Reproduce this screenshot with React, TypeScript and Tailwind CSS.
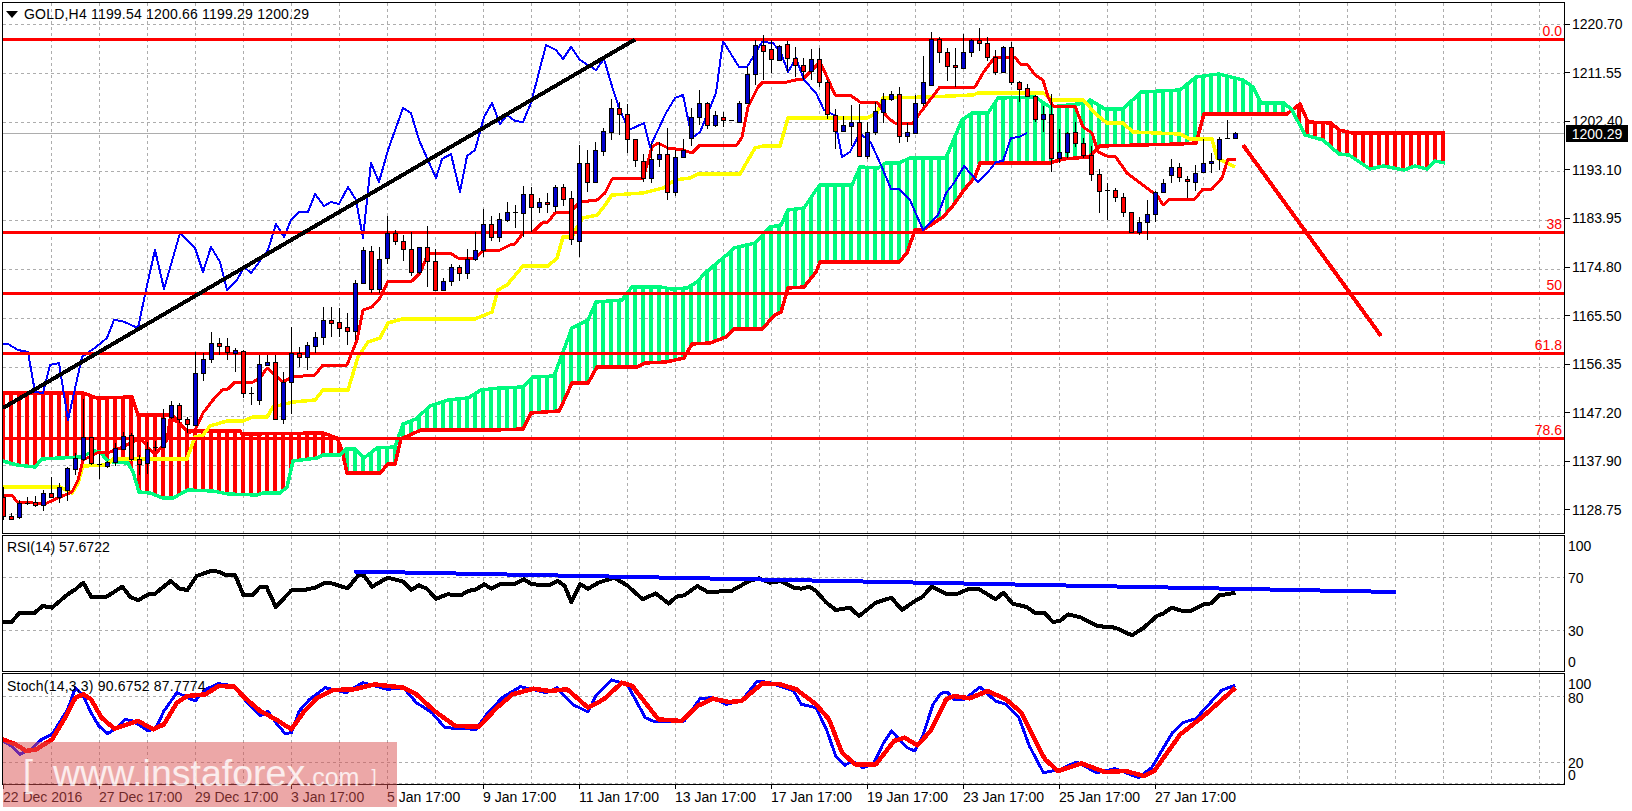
import React from "react";

type Pt = [number, number];
type Candle = [number, number, number, number, 0 | 1]; // high, top, bottom, low, 1 = up

const BAR = (i: number) => 3.5 + 8 * i;

// prices read off the chart, in page pixels
const candles: Candle[] = [
  [487, 497, 516, 520, 0], [513, 516, 519, 520, 0], [500, 503, 517, 519, 1], [497, 503, 504, 505, 0], [496, 502, 505, 507, 0],
  [490, 493, 505, 511, 1], [477, 493, 497, 498, 0], [483, 487, 497, 503, 1], [467, 468, 490, 501, 1], [453, 458, 469, 475, 1],
  [399, 437, 459, 461, 1], [437, 437, 463, 465, 0], [454, 464, 465, 479, 0], [461, 462, 466, 468, 1], [443, 448, 462, 466, 1],
  [432, 436, 449, 450, 1], [433, 435, 459, 461, 0], [455, 459, 464, 475, 0], [442, 449, 463, 474, 1], [441, 447, 448, 451, 0],
  [409, 418, 447, 448, 1], [401, 405, 417, 419, 1], [403, 405, 419, 423, 0], [417, 419, 424, 433, 0], [352, 373, 425, 426, 1],
  [353, 359, 373, 381, 1], [332, 343, 359, 363, 1], [338, 343, 346, 355, 0], [338, 346, 352, 360, 0], [348, 350, 353, 372, 1],
  [350, 351, 393, 398, 0], [387, 393, 394, 405, 0], [355, 364, 400, 405, 1], [355, 362, 365, 366, 1], [355, 362, 419, 419, 0],
  [372, 382, 419, 424, 1], [327, 353, 382, 414, 1], [347, 353, 357, 367, 0], [342, 345, 357, 370, 1], [332, 337, 346, 353, 1],
  [307, 320, 337, 345, 1], [307, 320, 323, 337, 0], [308, 322, 328, 337, 0], [313, 327, 331, 345, 0], [280, 283, 331, 340, 1],
  [247, 250, 283, 284, 1], [246, 251, 289, 293, 0], [247, 259, 289, 293, 1], [216, 233, 258, 264, 1], [230, 233, 241, 245, 0],
  [235, 241, 249, 261, 0], [232, 249, 272, 276, 0], [247, 247, 272, 274, 1], [226, 247, 261, 287, 0], [249, 261, 290, 291, 0],
  [278, 281, 290, 291, 1], [264, 267, 281, 286, 1], [265, 267, 273, 281, 0], [249, 259, 273, 279, 1], [232, 250, 259, 261, 1],
  [209, 224, 250, 257, 1], [216, 224, 237, 241, 0], [213, 219, 237, 242, 1], [202, 212, 220, 222, 1], [205, 212, 213, 228, 0],
  [186, 194, 213, 237, 1], [187, 194, 207, 232, 0], [198, 202, 207, 213, 1], [193, 202, 204, 213, 0], [185, 187, 206, 212, 1],
  [184, 187, 199, 206, 0], [191, 198, 239, 245, 0], [145, 163, 241, 257, 1], [150, 163, 182, 192, 0], [142, 150, 182, 183, 1],
  [128, 131, 151, 156, 1], [99, 108, 132, 140, 1], [102, 108, 114, 135, 0], [104, 114, 139, 153, 0], [139, 139, 160, 167, 0],
  [154, 161, 178, 182, 0], [143, 159, 178, 183, 1], [142, 154, 159, 167, 1], [128, 154, 192, 200, 0], [150, 157, 192, 196, 1],
  [139, 150, 157, 157, 1], [108, 117, 138, 146, 1], [90, 103, 117, 125, 1], [102, 103, 125, 129, 0], [111, 115, 125, 127, 1],
  [112, 117, 120, 127, 0], [120, 120, 121, 121, 0], [101, 103, 122, 122, 1], [67, 74, 103, 104, 1], [40, 45, 74, 85, 1],
  [35, 45, 51, 80, 0], [40, 49, 59, 73, 0], [45, 46, 60, 61, 1], [41, 44, 58, 72, 0], [47, 58, 65, 77, 0],
  [58, 65, 71, 80, 0], [49, 59, 71, 80, 1], [48, 59, 82, 87, 0], [80, 82, 114, 119, 0], [109, 115, 131, 149, 0],
  [116, 125, 131, 132, 1], [105, 122, 126, 146, 1], [104, 122, 156, 157, 0], [122, 132, 156, 159, 1], [102, 111, 132, 135, 1],
  [93, 99, 112, 123, 1], [91, 94, 99, 101, 1], [87, 94, 136, 143, 0], [123, 132, 136, 142, 1], [95, 103, 133, 134, 1],
  [56, 82, 103, 106, 1], [32, 39, 85, 86, 1], [37, 39, 52, 63, 0], [48, 52, 66, 81, 0], [48, 65, 67, 87, 0],
  [34, 52, 68, 68, 1], [39, 40, 52, 57, 1], [28, 40, 43, 51, 0], [37, 43, 57, 61, 0], [50, 57, 72, 75, 0],
  [46, 47, 72, 73, 1], [42, 47, 82, 85, 0], [81, 82, 89, 102, 0], [84, 88, 96, 96, 0], [95, 96, 119, 122, 0],
  [106, 114, 119, 132, 1], [94, 114, 158, 172, 0], [129, 152, 158, 163, 1], [132, 133, 152, 158, 1], [122, 132, 143, 147, 0],
  [138, 143, 155, 158, 0], [146, 155, 174, 181, 0], [169, 174, 191, 213, 0], [183, 190, 191, 220, 0], [188, 190, 197, 202, 0],
  [193, 197, 212, 217, 0], [212, 212, 232, 233, 0], [217, 222, 232, 235, 1], [200, 214, 222, 240, 1], [191, 192, 214, 222, 1],
  [179, 183, 192, 193, 1], [159, 167, 175, 183, 1], [163, 167, 177, 182, 0], [176, 179, 181, 198, 0], [165, 173, 182, 191, 1],
  [139, 163, 172, 173, 1], [153, 161, 163, 173, 1], [137, 139, 159, 170, 1], [120, 138, 139, 139, 0], [132, 133, 138, 139, 1],
];

const senkouA: Pt[] = [
  [3, 461], [17, 465], [35, 467], [42, 459], [60, 458], [80, 457], [90, 453], [95, 451], [100, 452], [107, 460], [113, 462], [128, 463],
  [133, 472], [139, 492], [150, 493], [163, 498], [173, 498], [188, 490], [213, 491], [228, 494], [257, 495], [263, 493], [280, 493],
  [287, 487], [293, 461], [317, 458], [323, 455], [340, 455], [346, 449], [355, 449], [364, 458], [377, 448], [395, 447], [403, 424],
  [416, 419], [430, 406], [448, 400], [468, 398], [481, 390], [500, 388], [523, 387], [533, 377], [554, 376], [572, 328], [588, 320],
  [596, 302], [622, 300], [632, 287], [661, 287], [671, 289], [687, 288], [697, 282], [705, 273], [729, 253], [734, 248], [755, 243],
  [770, 227], [781, 225], [788, 210], [804, 208], [816, 190], [820, 185], [852, 185], [860, 167], [878, 168], [886, 163], [899, 163],
  [910, 158], [946, 158], [962, 120], [972, 113], [988, 113], [998, 98], [1035, 97], [1050, 107], [1087, 103], [1090, 100], [1105, 109],
  [1123, 109], [1141, 92], [1180, 90], [1196, 77], [1219, 74], [1243, 80], [1253, 87], [1261, 103], [1284, 103], [1292, 110], [1305, 135],
  [1323, 140], [1339, 154], [1349, 155], [1370, 169], [1383, 166], [1404, 170], [1415, 166], [1427, 169], [1435, 161], [1445, 163],
];

const senkouB: Pt[] = [
  [3, 393], [83, 393], [97, 398], [132, 397], [138, 415], [172, 415], [187, 431], [240, 431], [242, 434], [323, 433], [337, 438], [342, 450],
  [347, 473], [380, 473], [388, 464], [395, 464], [401, 439], [421, 430], [494, 430], [523, 429], [531, 413], [559, 411], [562, 405], [572, 383],
  [588, 383], [597, 367], [637, 367], [645, 363], [666, 362], [684, 358], [692, 344], [710, 343], [726, 337], [734, 329], [762, 329], [775, 315],
  [781, 312], [788, 288], [804, 287], [816, 272], [820, 262], [899, 262], [907, 253], [915, 230], [923, 230], [943, 217], [952, 207], [964, 190],
  [975, 177], [980, 163], [1050, 163], [1063, 159], [1089, 157], [1100, 146], [1180, 144], [1196, 143], [1204, 114], [1287, 114], [1300, 104],
  [1308, 122], [1331, 123], [1339, 130], [1352, 133], [1445, 133],
];

const kijun: Pt[] = [
  [3, 487], [60, 487], [72, 493], [78, 483], [83, 466], [107, 465], [113, 459], [187, 459], [195, 437], [203, 435], [210, 426], [227, 421],
  [243, 421], [253, 417], [267, 417], [273, 407], [293, 402], [315, 400], [323, 390], [348, 390], [358, 357], [368, 342], [380, 338], [388, 323],
  [402, 319], [475, 319], [492, 312], [498, 290], [507, 285], [523, 266], [548, 266], [557, 258], [563, 237], [572, 237], [575, 230], [583, 218],
  [597, 215], [603, 208], [612, 195], [643, 193], [663, 188], [675, 180], [690, 178], [698, 174], [740, 174], [755, 148], [763, 146], [780, 146],
  [788, 118], [867, 118], [877, 113], [883, 98], [928, 97], [973, 95], [978, 93], [1043, 93], [1053, 100], [1083, 100], [1097, 115], [1107, 123],
  [1123, 123], [1133, 132], [1180, 134], [1190, 139], [1212, 139], [1217, 158], [1235, 167],
];

const tenkan: Pt[] = [
  [3, 495], [12, 495], [17, 502], [33, 503], [47, 503], [58, 498], [72, 492], [78, 480], [83, 460], [97, 453], [110, 452], [123, 447], [140, 438],
  [155, 455], [167, 440], [170, 419], [180, 423], [188, 433], [195, 430], [203, 413], [213, 400], [222, 390], [228, 389], [235, 382], [253, 382],
  [260, 378], [267, 368], [283, 382], [292, 377], [315, 375], [323, 365], [347, 365], [353, 350], [357, 340], [363, 310], [372, 307], [380, 298],
  [388, 281], [412, 281], [420, 273], [428, 254], [450, 253], [458, 258], [475, 258], [483, 251], [500, 250], [510, 245], [515, 244], [523, 233],
  [533, 232], [542, 223], [548, 222], [555, 213], [570, 212], [580, 202], [597, 200], [605, 193], [612, 179], [643, 178], [647, 165], [652, 147],
  [658, 143], [668, 148], [683, 150], [692, 153], [700, 145], [737, 145], [742, 137], [748, 107], [758, 87], [763, 82], [787, 82], [800, 79],
  [803, 79], [820, 62], [827, 77], [835, 95], [850, 95], [860, 102], [878, 103], [887, 117], [895, 123], [913, 123], [920, 113], [940, 87], [975, 87],
  [983, 73], [995, 57], [1015, 57], [1020, 64], [1027, 64], [1035, 75], [1043, 80], [1048, 97], [1053, 106], [1075, 106], [1083, 127], [1092, 133],
  [1098, 152], [1107, 156], [1115, 156], [1127, 173], [1152, 192], [1157, 195], [1163, 205], [1170, 199], [1195, 199], [1203, 189], [1212, 189],
  [1222, 178], [1228, 159], [1236, 159],
];

const chikou: Pt[] = [
  [3, 344], [8, 344], [18, 350], [28, 352], [35, 392], [43, 393], [50, 365], [59, 363], [68, 420], [82, 357], [96, 347], [107, 338], [114, 320],
  [122, 321], [138, 328], [146, 290], [155, 250], [164, 289], [180, 233], [195, 248], [203, 272], [211, 247], [220, 262], [227, 290], [237, 280],
  [244, 267], [251, 273], [268, 250], [276, 224], [284, 237], [291, 220], [299, 212], [308, 212], [315, 194], [324, 206], [331, 202], [339, 204],
  [348, 187], [356, 200], [363, 238], [371, 163], [379, 182], [388, 150], [403, 108], [411, 113], [419, 140], [436, 178], [442, 159], [451, 154],
  [460, 192], [467, 156], [475, 150], [484, 117], [492, 103], [500, 124], [507, 115], [515, 121], [523, 122], [531, 103], [546, 45], [556, 50],
  [563, 59], [571, 47], [580, 60], [588, 65], [596, 70], [604, 59], [611, 83], [619, 108], [629, 130], [644, 123], [650, 147], [666, 113], [675, 98],
  [683, 95], [692, 138], [700, 132], [716, 93], [723, 41], [739, 67], [747, 67], [762, 42], [773, 43], [781, 53], [788, 72], [796, 58], [804, 80],
  [816, 93], [824, 110], [834, 115], [842, 157], [850, 152], [860, 133], [871, 143], [881, 165], [891, 189], [899, 189], [910, 200], [923, 230],
  [938, 215], [946, 193], [954, 183], [964, 166], [978, 182], [988, 172], [996, 162], [1003, 161], [1011, 138], [1019, 137], [1027, 133],
];

// indicator panes were read from half-size crops, these two put them back in page pixels
const left = (pts: Pt[]): Pt[] => pts.map(([x, y]) => [x / 1.9216, 406 + y / 3]);
const right = (pts: Pt[]): Pt[] => pts.map(([x, y]) => [816 + x / 1.9216, 406 + y / 3]);

const rsi: Pt[] = [
  ...left([[5, 648], [22, 648], [38, 620], [65, 622], [82, 600], [100, 605], [130, 565], [145, 550], [160, 530], [175, 572], [205, 572], [235, 542], [250, 572], [265, 583], [285, 565], [298, 563], [328, 525], [345, 548], [360, 552], [378, 510], [405, 495], [420, 497], [435, 508], [452, 508], [468, 568], [485, 568], [500, 542], [512, 542], [530, 603], [560, 553], [585, 552], [605, 545], [622, 532], [637, 532], [668, 547], [690, 505], [700, 510], [715, 542], [745, 515], [775, 527], [790, 552], [805, 538], [820, 548], [838, 578], [860, 565], [885, 568], [900, 555], [915, 550], [930, 535], [945, 548], [960, 535], [990, 533], [1007, 520], [1022, 535], [1055, 537], [1072, 525], [1085, 540], [1098, 588], [1115, 535], [1130, 548], [1150, 530], [1180, 515], [1205, 538], [1235, 580], [1260, 562], [1285, 593], [1300, 572], [1315, 568], [1340, 540], [1360, 558], [1405, 555], [1440, 525], [1458, 517], [1480, 530], [1500, 525], [1525, 545], [1540, 548], [1555, 542]]),
  ...right([[0, 555], [20, 590], [38, 612], [65, 605], [83, 630], [115, 590], [145, 575], [165, 612], [190, 585], [205, 572], [222, 542], [250, 563], [272, 563], [295, 548], [312, 548], [345, 580], [360, 560], [378, 593], [405, 603], [420, 620], [440, 622], [455, 648], [468, 645], [485, 625], [510, 635], [540, 660], [575, 665], [607, 688], [630, 665], [655, 630], [668, 622], [683, 605], [705, 615], [720, 615], [745, 595], [760, 592], [775, 567], [790, 565], [806, 560]]),
];

const stochMain: Pt[] = [
  ...left([[5, 1005], [22, 1020], [38, 1045], [60, 1030], [80, 1000], [100, 985], [130, 910], [145, 845], [160, 870], [175, 920], [190, 960], [207, 983], [225, 965], [240, 940], [255, 945], [285, 975], [300, 965], [315, 915], [340, 860], [375, 885], [395, 850], [420, 833], [450, 840], [475, 890], [500, 930], [515, 915], [530, 950], [548, 983], [560, 980], [575, 915], [595, 880], [625, 845], [665, 860], [697, 830], [745, 850], [775, 845], [800, 890], [830, 920], [855, 965], [915, 970], [935, 925], [965, 875], [1000, 842], [1050, 860], [1070, 845], [1100, 895], [1130, 918], [1145, 870], [1175, 822], [1205, 835], [1240, 935], [1255, 945], [1315, 945], [1345, 878], [1370, 875], [1395, 895], [1425, 885], [1455, 825], [1480, 830], [1525, 855], [1540, 895]]),
  ...right([[0, 905], [20, 970], [38, 1050], [55, 1078], [70, 1065], [90, 1085], [110, 1075], [130, 1010], [145, 975], [175, 1025], [190, 1035], [205, 990], [225, 895], [240, 862], [252, 858], [265, 880], [285, 880], [315, 843], [345, 885], [365, 895], [390, 935], [410, 1020], [437, 1100], [470, 1090], [500, 1068], [540, 1100], [575, 1088], [620, 1115], [645, 1085], [685, 980], [705, 950], [730, 938], [780, 852], [806, 838]]),
];

const stochSignal: Pt[] = [
  ...left([[5, 1000], [30, 1015], [50, 1035], [70, 1030], [100, 1000], [125, 935], [145, 875], [160, 865], [175, 880], [195, 935], [220, 968], [240, 958], [265, 945], [295, 970], [315, 955], [340, 890], [360, 870], [395, 865], [420, 840], [450, 842], [470, 875], [500, 915], [530, 940], [560, 970], [585, 915], [610, 875], [640, 852], [680, 850], [720, 835], [775, 845], [800, 865], [835, 915], [875, 960], [920, 962], [955, 905], [985, 865], [1025, 848], [1055, 855], [1090, 850], [1130, 905], [1160, 880], [1195, 830], [1215, 840], [1265, 940], [1310, 945], [1340, 900], [1370, 878], [1400, 888], [1425, 885], [1465, 832], [1500, 835], [1530, 850]]),
  ...right([[0, 895], [25, 940], [50, 1040], [75, 1075], [115, 1075], [150, 1005], [170, 995], [195, 1018], [220, 975], [250, 880], [265, 870], [295, 877], [330, 855], [365, 880], [395, 920], [420, 1000], [440, 1060], [465, 1095], [510, 1072], [555, 1098], [595, 1095], [630, 1110], [650, 1095], [700, 985], [745, 930], [806, 845]]),
];

const priceLabels = ["1220.70", "1211.55", "1202.40", "1193.10", "1183.95", "1174.80", "1165.50", "1156.35", "1147.20", "1137.90", "1128.75"];
const timeLabels = ["22 Dec 2016", "27 Dec 17:00", "29 Dec 17:00", "3 Jan 17:00", "5 Jan 17:00", "9 Jan 17:00", "11 Jan 17:00", "13 Jan 17:00", "17 Jan 17:00", "19 Jan 17:00", "23 Jan 17:00", "25 Jan 17:00", "27 Jan 17:00"];
const fibs = [
  { y: 39.5, label: "0.0", labelY: 36 },
  { y: 232.5, label: "38", labelY: 229 },
  { y: 293.5, label: "50", labelY: 290 },
  { y: 353.5, label: "61.8", labelY: 350 },
  { y: 438.5, label: "78.6", labelY: 435 },
];

const gridX = Array.from({ length: 32 }, (_, i) => 51.5 + 48 * i);

const pts = (p: Pt[]) => p.map(([x, y]) => `${x},${y}`).join(" ");

function yAt(line: Pt[], x: number) {
  for (let i = 1; i < line.length; i++) {
    if (x <= line[i][0]) {
      const [x0, y0] = line[i - 1];
      const [x1, y1] = line[i];
      return y0 + ((y1 - y0) * (x - x0)) / (x1 - x0);
    }
  }
  return line[line.length - 1][1];
}

function Grid({ top, bottom, rows }: { top: number; bottom: number; rows: number[] }) {
  return (
    <g stroke="#adadad" strokeWidth={1} strokeDasharray="3 3" shapeRendering="crispEdges">
      {gridX.map((x) => (
        <line key={x} x1={x} x2={x} y1={top} y2={bottom} />
      ))}
      {rows.map((y) => (
        <line key={y} x1={3} x2={1564} y1={y} y2={y} />
      ))}
    </g>
  );
}

function Trace({ points, color, width }: { points: Pt[]; color: string; width: number }) {
  return <polyline points={pts(points)} fill="none" stroke={color} strokeWidth={width} strokeLinejoin="round" shapeRendering="crispEdges" />;
}

function MainChart() {
  const stripes = Array.from({ length: 181 }, (_, i) => {
    const cx = BAR(i);
    const a = yAt(senkouA, cx);
    const b = yAt(senkouB, cx);
    return (
      <rect key={i} x={Math.floor(cx) - 2} y={Math.min(a, b)} width={4} height={Math.abs(a - b)} fill={a < b ? "#00fa7f" : "#ff0000"} />
    );
  });

  return (
    <svg viewBox="3 3 1561 530" className="block h-full w-full">
      <Grid top={3} bottom={533} rows={priceLabels.map((_, i) => 24.5 + 49 * i)} />
      <line x1={3} x2={1564} y1={133.5} y2={133.5} stroke="#adadad" strokeWidth={1} shapeRendering="crispEdges" />
      <g shapeRendering="crispEdges">{stripes}</g>
      <Trace points={senkouB} color="#ff0000" width={3.5} />
      <Trace points={senkouA} color="#00fa7f" width={3.5} />
      <Trace points={kijun} color="#ffff00" width={3.5} />
      <Trace points={tenkan} color="#ff0000" width={3} />
      <Trace points={chikou} color="#0000ff" width={2} />
      {fibs.map((f) => (
        <line key={f.y} x1={3} x2={1564} y1={f.y} y2={f.y} stroke="#ff0000" strokeWidth={3} shapeRendering="crispEdges" />
      ))}
      <line x1={3} y1={408} x2={635} y2={39.5} stroke="#000" strokeWidth={4} shapeRendering="crispEdges" />
      <line x1={1243} y1={145} x2={1381} y2={336} stroke="#ff0000" strokeWidth={4} shapeRendering="crispEdges" />
      <g shapeRendering="crispEdges">
        {candles.map(([high, top, bottom, low, up], i) => {
          const cx = BAR(i);
          return (
            <g key={i}>
              <line x1={cx} x2={cx} y1={high} y2={low} stroke="#000" />
              {bottom - top < 2 ? (
                <line x1={cx - 2.5} x2={cx + 2.5} y1={top + 0.5} y2={top + 0.5} stroke="#000" />
              ) : (
                <rect x={cx - 2} y={top + 0.5} width={4} height={bottom - top} fill={up ? "#0000cd" : "#ff0000"} stroke="#000" />
              )}
            </g>
          );
        })}
      </g>
      {fibs.map((f) => (
        <text key={f.label} x={1562} y={f.labelY} textAnchor="end" fontSize={14} fill="#ff0000">
          {f.label}
        </text>
      ))}
    </svg>
  );
}

function RsiChart() {
  return (
    <svg viewBox="3 536 1561 135" className="block h-full w-full">
      <Grid top={536} bottom={671} rows={[577.5, 630.5]} />
      <Trace points={rsi} color="#000" width={4} />
      <line x1={354} y1={571.5} x2={1396} y2={592} stroke="#0000ff" strokeWidth={4} shapeRendering="crispEdges" />
    </svg>
  );
}

function StochChart() {
  return (
    <svg viewBox="3 674 1561 110" className="block h-full w-full">
      <Grid top={674} bottom={784} rows={[696.5, 762.5, 783.5]} />
      <Trace points={stochMain} color="#0000ff" width={3} />
      <Trace points={stochSignal} color="#ff0000" width={4.5} />
    </svg>
  );
}

export default function App() {
  return (
    <div className="relative h-[811px] w-[1632px] overflow-hidden bg-white font-['Liberation_Sans',sans-serif] text-[14px] leading-none text-black">
      {/* main pane */}
      <div className="flex h-[534px]">
        <div className="relative ml-[2px] mt-[2px] h-[532px] w-[1563px] border border-black">
          <MainChart />
          <div className="absolute left-[3px] top-[4px] flex items-center gap-[6px]">
            <span className="h-0 w-0 border-x-[6px] border-t-[7px] border-x-transparent border-t-black" />
            <span className="whitespace-pre tracking-[0.2px]">GOLD,H4 1199.54 1200.66 1199.29 1200.29</span>
          </div>
        </div>
        <div className="flex flex-col">
          {priceLabels.map((p) => (
            <div key={p} className="flex h-[49px] items-center gap-[2px]">
              <span className="h-px w-[5px] bg-black" />
              <span>{p}</span>
            </div>
          ))}
        </div>
      </div>

      {/* rsi pane */}
      <div className="mt-px flex h-[137px]">
        <div className="relative ml-[2px] h-full w-[1563px] border border-black">
          <RsiChart />
          <span className="absolute left-[4px] top-[4px]">RSI(14) 57.6722</span>
        </div>
        <div className="flex flex-col pl-[3px] pt-[4px]">
          <span className="h-[14px]">100</span>
          <span className="mt-[18px] h-[14px]">70</span>
          <span className="mt-[39px] h-[14px]">30</span>
          <span className="mt-[17px] h-[14px]">0</span>
        </div>
      </div>

      {/* stochastic pane */}
      <div className="mt-px flex h-[112px]">
        <div className="relative ml-[2px] h-full w-[1563px] border border-black">
          <StochChart />
          <span className="absolute left-[4px] top-[5px] tracking-[0.2px]">Stoch(14,3,3) 90.6752 87.7774</span>
        </div>
        <div className="flex flex-col pl-[3px] pt-[4px]">
          <span className="h-[14px]">100</span>
          <span className="h-[14px]">80</span>
          <span className="mt-[51px] h-[14px]">20</span>
          <span className="-mt-[2px] h-[14px]">0</span>
        </div>
      </div>

      {/* time axis */}
      <div className="ml-[3px] flex">
        {timeLabels.map((t) => (
          <div key={t} className="flex w-[96px] flex-col">
            <span className="h-[4px] w-px bg-black" />
            <span className="mt-[1px] whitespace-pre">{t}</span>
          </div>
        ))}
      </div>

      {/* current price tag */}
      <div className="absolute left-[1566px] top-[125px] flex h-[17px] w-[62px] items-center justify-center bg-black text-white">1200.29</div>

      {/* broker watermark */}
      <div className="absolute left-[3px] top-[742px] flex h-[65px] w-[394px] items-baseline bg-[#d94f4f]/50 pl-[20px] pt-[13px] text-white/80">
        <span className="text-[36px]">[</span>
        <span className="ml-[20px] text-[37.5px]">
          www.instaforex<span className="text-[25px]">.com</span>
        </span>
        <span className="ml-[12px] -translate-y-[4px] text-[18px]">]</span>
      </div>
    </div>
  );
}
